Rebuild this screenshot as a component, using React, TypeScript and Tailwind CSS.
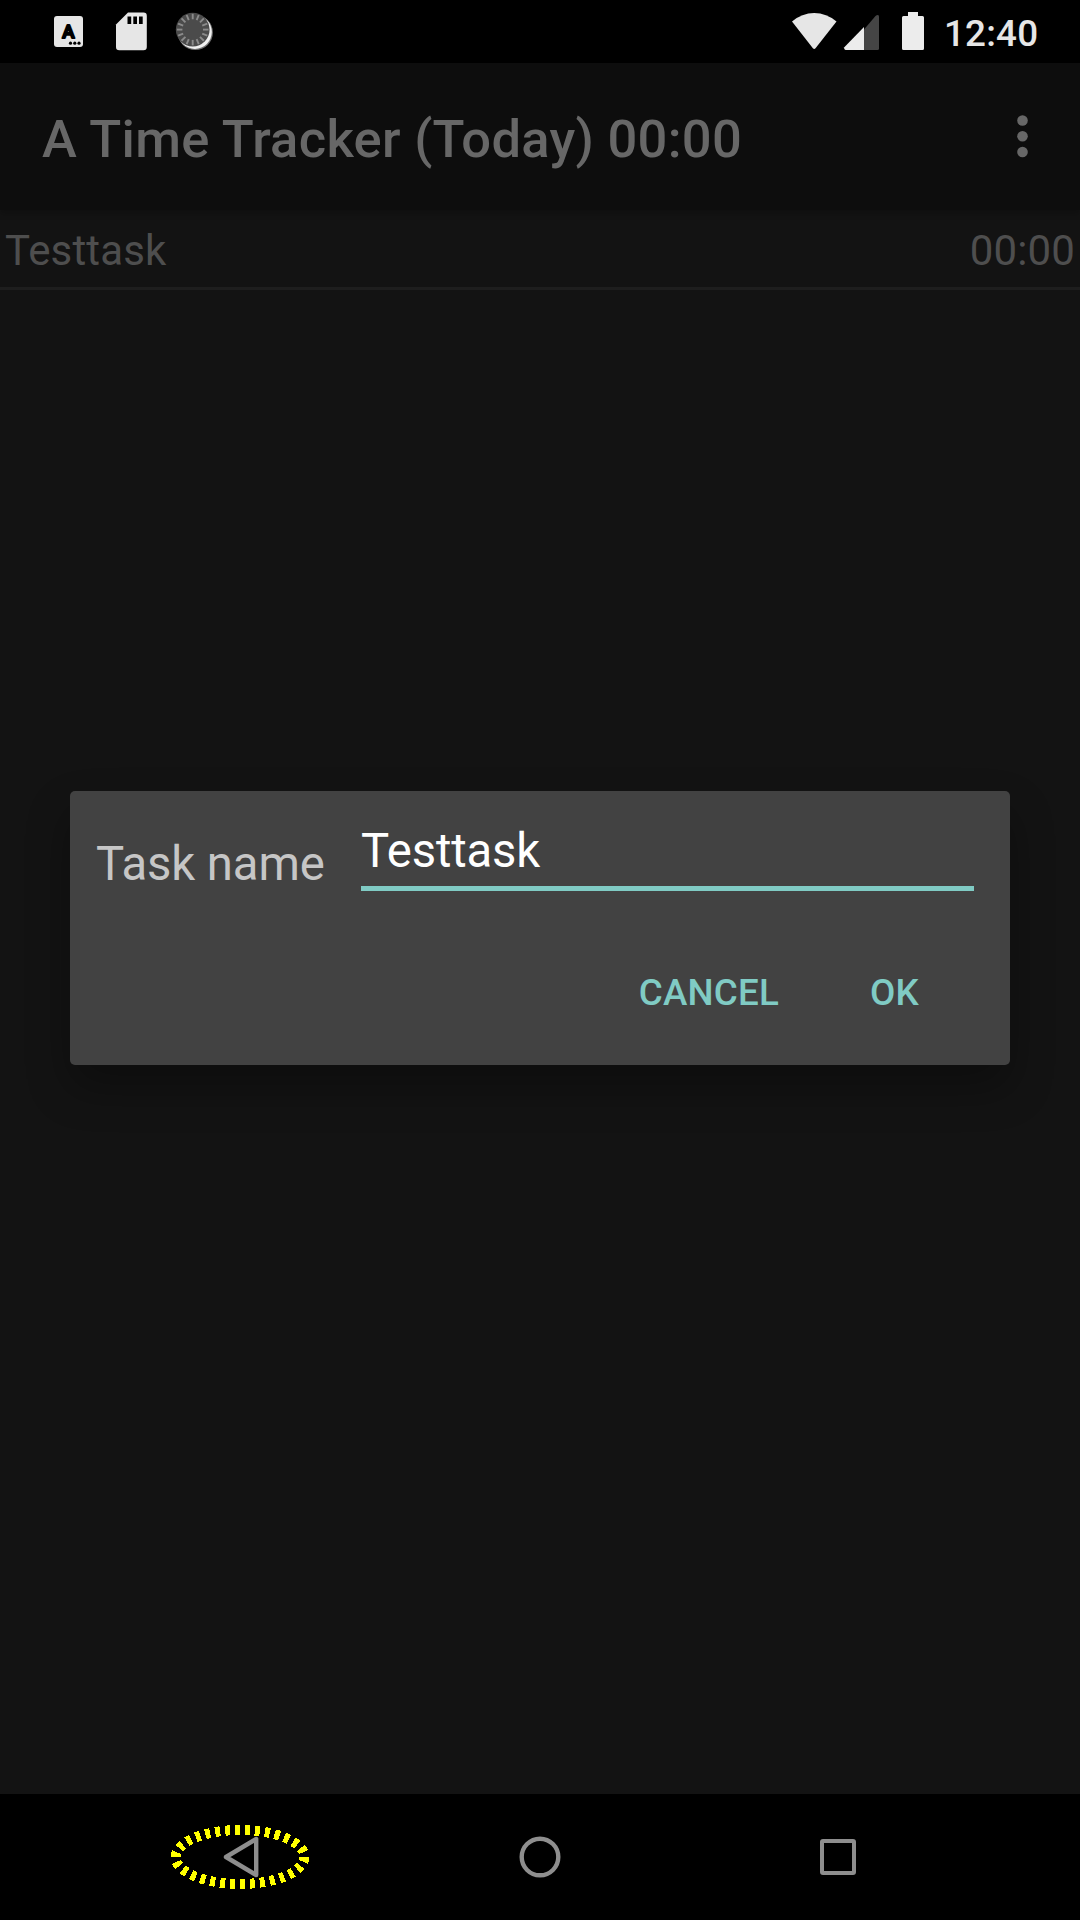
import React from 'react';

const ticks = Array.from({ length: 16 }, (_, i) => i * 22.5);

function NotificationIcons() {
  return (
    <svg width="240" height="63" viewBox="0 0 240 63">
      <rect x="54" y="16" width="29" height="31" rx="3" fill="#e6e6e6" />
      <text x="68.4" y="37.6" textAnchor="middle" fontFamily="Roboto" fontWeight="500" fontSize="18.5" fill="#000" stroke="#000" strokeWidth="2" strokeLinejoin="round">A</text>
      <circle cx="70.5" cy="43.2" r="1.6" />
      <circle cx="74.8" cy="43.2" r="1.6" />
      <circle cx="79" cy="43.2" r="1.6" />
      <path d="M128 12.5H143.5a3.3 3.3 0 0 1 3.3 3.3V47a3.3 3.3 0 0 1-3.3 3.3H119.300a3.300 3.300 0 0 1-3.300-3.300V24.500Z" fill="#e6e6e6" />
      <path d="M127.500 16.500h3.700v7.500h-3.700zM133.300 16.500h3.700v7.500h-3.700zM139 16.500h3.700v7.500h-3.700z" />
      <circle cx="195.300" cy="32.500" r="17.600" fill="#707070" />
      <circle cx="194.900" cy="32" r="16.900" fill="#f0f0f0" />
      <circle cx="192.700" cy="29.600" r="16.900" fill="#4b4b4b" />
      <g stroke="#8b8b8b" strokeWidth="1.900">
        {ticks.map((a) => (
          <line key={a} x1="192.700" y1="13.800" x2="192.700" y2="19.300" transform={`rotate(${a} 192.700 29.600)`} />
        ))}
      </g>
    </svg>
  );
}

function SystemIcons() {
  return (
    <svg width="145" height="63" viewBox="785 0 145 63">
      <path d="M792 21.500Q802 13 814.200 13T836.500 21.500L815.500 48.300Q814.200 49.800 812.900 48.300Z" fill="#e6e6e6" />
      <path d="M864 29.500L875.500 16Q877 14.800 878.500 15.200Q879 15.600 879 17V48.500Q879 50 877.500 50H864Z" fill="#454545" />
      <path d="M864 27V50H845.500Q843.500 49.500 844.300 47.300Z" fill="#ececec" />
      <path d="M908 12h10v4h4.500a1.500 1.500 0 0 1 1.500 1.500v31a1.500 1.500 0 0 1-1.500 1.500h-19a1.500 1.500 0 0 1-1.500-1.500v-31a1.500 1.500 0 0 1 1.500-1.500h4.500z" fill="#ececec" />
    </svg>
  );
}

function StatusBar() {
  return (
    <div className="flex h-[63px] justify-between bg-black">
      <NotificationIcons />
      <div className="flex w-[295px]">
        <SystemIcons />
        <span className="ml-3.5 mt-1 text-[36.75px] leading-[59px] font-medium tracking-[0.2px] text-[#e6e6e6]">12:40</span>
      </div>
    </div>
  );
}

function NavigationBar() {
  return (
    <nav className="flex h-[126px] items-center bg-black pl-[160px]">
      <svg width="160" height="80" viewBox="160 1817 160 80">
        <path d="M226 1857L256.200 1839V1875Z" fill="none" stroke="#8e8e8e" strokeWidth="4.400" strokeLinejoin="round" />
        <ellipse cx="240" cy="1857" rx="64.500" ry="27" fill="none" stroke="#ff0" strokeWidth="10" pathLength="300" strokeDasharray="5 5" shapeRendering="crispEdges" />
      </svg>
      <svg className="ml-[199px]" width="42" height="42" viewBox="0 0 42 42">
        <circle cx="21" cy="21" r="18.300" fill="none" stroke="#8e8e8e" strokeWidth="4.400" />
      </svg>
      <div className="ml-[259px] size-9 rounded-[3px] border-4 border-[#8e8e8e]" />
    </nav>
  );
}

function TaskDialog() {
  return (
    <div className="flex h-[274px] w-[940px] flex-col rounded-[5px] bg-[#424242] pl-[26px] pr-9 shadow-[0_22px_44px_rgba(0,0,0,0.3)]">
      <div className="flex justify-between">
        <label className="pt-[43px] text-[47.25px] leading-[60px] tracking-[-0.1px] text-[#c6c6c6]">Task name</label>
        <div className="mt-[30px] h-[70px] w-[613px] border-b-[5px] border-[#80cbc4] text-[47.25px] leading-[60px] tracking-[-0.15px] text-white">Testtask</div>
      </div>
      <div className="mt-[74px] flex justify-end gap-[91px] pr-[55px] text-[36.75px] leading-[50px] font-medium tracking-[0.2px] text-[#80cbc4]">
        <button>CANCEL</button>
        <button>OK</button>
      </div>
    </div>
  );
}

export default function App() {
  return (
    <div className="flex h-[1920px] w-[1080px] flex-col overflow-hidden bg-[#131313] font-['Roboto',sans-serif]">
      <StatusBar />
      <div className="relative flex flex-1 flex-col">
        <header className="flex h-[147px] items-center justify-between bg-[#0d0d0d] pl-[42px] pr-[52px] shadow-[0_4px_6px_rgba(0,0,0,0.2)]">
          <h1 className="pt-[5px] text-[52.5px] leading-[60px] font-medium tracking-[0.29px] text-[#676767]">A Time Tracker (Today) 00:00</h1>
          <svg className="-mt-px" width="11" height="44" viewBox="0 0 11 44" fill="#676767">
            <circle cx="5.500" cy="6.500" r="5.300" />
            <circle cx="5.500" cy="22.200" r="5.300" />
            <circle cx="5.500" cy="38" r="5.300" />
          </svg>
        </header>
        <div className="flex h-20 justify-between border-b-[3px] border-[#1e1e1e] px-[5px] pt-[15px] text-[42px] leading-[52px] tracking-[0.15px] text-[#4e4e4e]">
          <span>Testtask</span>
          <span>00:00</span>
        </div>
        <div className="absolute inset-x-0 top-0 bottom-px flex items-center justify-center">
          <TaskDialog />
        </div>
      </div>
      <NavigationBar />
    </div>
  );
}
